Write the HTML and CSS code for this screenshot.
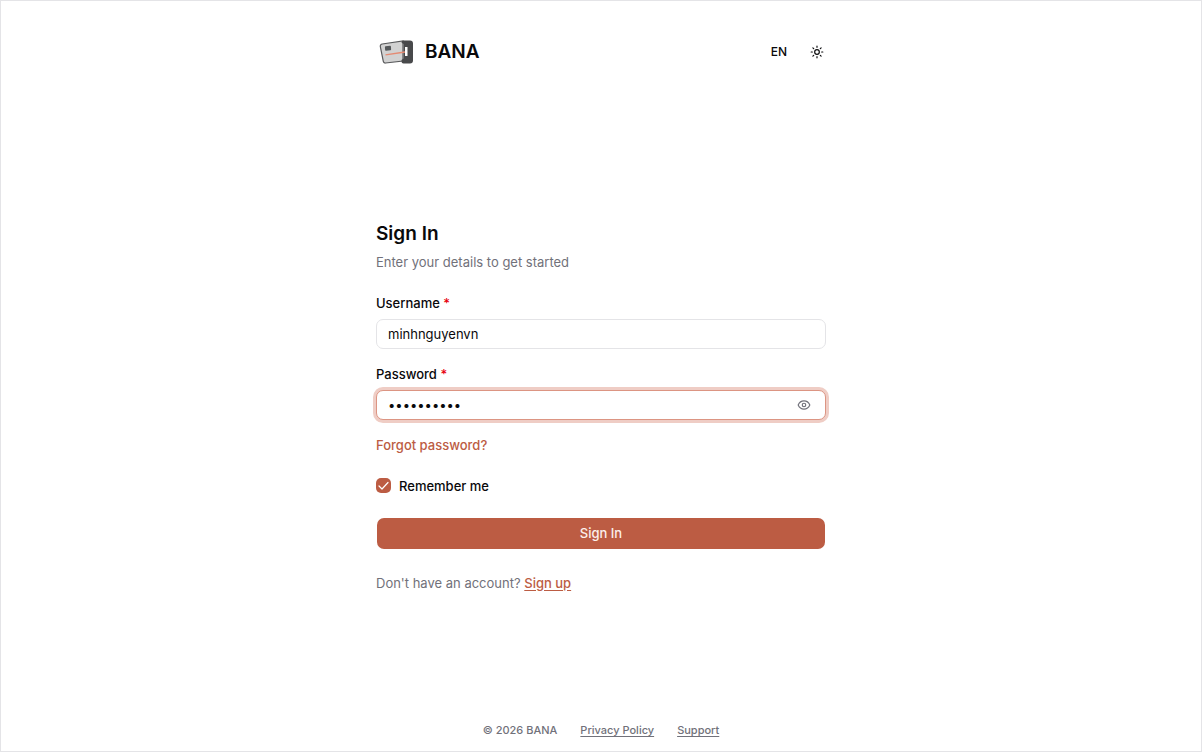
FILE: index.html
```html
<!DOCTYPE html>
<html lang="en">
<head>
  <meta charset="UTF-8">
  <meta name="viewport" content="width=device-width, initial-scale=1.0">
  <title>Sign In - BANA</title>
  <link rel="stylesheet" href="styles.css">
</head>
<body>

<div class="page">
  <header class="header">
    <a href="#" class="brand">
      <svg class="brand-logo" viewBox="0 0 36 26" aria-hidden="true">
        <path d="M3.200 5 24 2v20L6.500 24a2 2 0 0 1-2.200-1.600L1.300 7.500A2.200 2.200 0 0 1 3.200 5z" fill="#d2d2d2" stroke="#58595b" stroke-width="1.200"/>
        <path d="M24.500 1.500h6.500a3 3 0 0 1 3 3v17a3 3 0 0 1-3 3h-6.500a2 2 0 0 1-2-2v-1.500l2-1.500V5l-2-1.500a2 2 0 0 1 2-2z" fill="#48494b"/>
        <rect x="26" y="8" width="2.500" height="9" fill="#fff"/>
        <rect x="6" y="7" width="6" height="4.500" rx="0.800" fill="#55585a" transform="rotate(-4 9 9)"/>
        <path d="M6.500 15.800 26 13" stroke="#e58a72" stroke-width="1.300"/>
      </svg>
      <span class="brand-name">BANA</span>
    </a>
    <div class="header-actions">
      <button type="button" class="header-button">EN</button>
      <button type="button" class="header-button" aria-label="Toggle theme">
        <svg class="icon" viewBox="0 0 24 24" aria-hidden="true">
          <circle cx="12" cy="12" r="4"/>
          <path d="M12 2v2M12 20v2M4.930 4.930l1.410 1.410M17.660 17.660l1.410 1.410M2 12h2M20 12h2M6.340 17.660l-1.410 1.410M19.070 4.930l-1.410 1.410"/>
        </svg>
      </button>
    </div>
  </header>

  <main class="main">
    <h1 class="title">Sign In</h1>
    <p class="subtitle">Enter your details to get started</p>

    <form id="signinForm">
      <div class="form-group">
        <label for="username">Username <span class="required">*</span></label>
        <input type="text" id="username" name="username" class="text-input" value="minhnguyenvn">
      </div>
      <div class="form-group">
        <label for="password">Password <span class="required">*</span></label>
        <div class="password-field">
          <input type="password" id="password" name="password" class="password-input" value="mypassword">
          <button type="button" class="eye-button" aria-label="Show password">
            <svg class="icon" viewBox="0 0 24 24" aria-hidden="true">
              <path d="M2 12C4 7.500 7.500 5 12 5s8 2.500 10 7c-2 4.500-5.500 7-10 7S4 16.500 2 12z"/>
              <circle cx="12" cy="12" r="3"/>
            </svg>
          </button>
        </div>
      </div>
      <a href="#" class="forgot-link">Forgot password?</a>
      <div class="remember">
        <input type="checkbox" id="remember" name="remember" class="checkbox" checked>
        <label for="remember">Remember me</label>
      </div>
      <button type="submit" class="signin-button">Sign In</button>
    </form>

    <p class="signup-text">Don't have an account? <a href="#" class="signup-link">Sign up</a></p>
  </main>

  <footer class="footer">
    <span>© 2026 BANA</span>
    <a href="#">Privacy Policy</a>
    <a href="#">Support</a>
  </footer>
</div>

</body>
</html>
```
FILE: styles.css
```css
* {
  box-sizing: border-box;
}

/* Basic Page Styling */
body {
  margin: 0;
  font-family: Inter, sans-serif;
  font-size: 13px;
  line-height: 20px;
  color: #09090b;
  background-color: #fff;
}

h1,
p {
  margin: 0;
}

button,
input {
  font: inherit;
  color: inherit;
}

button {
  padding: 0;
  border: none;
  background: none;
  cursor: pointer;
}

.page {
  display: flex;
  flex-direction: column;
  align-items: center;
  min-height: 100vh;
  border: 1px solid #e4e4e7;
}

.icon {
  display: block;
  width: 14px;
  height: 14px;
  fill: none;
  stroke: currentColor;
  stroke-width: 2;
  stroke-linecap: round;
  stroke-linejoin: round;
}

/* Header */
.header {
  display: flex;
  justify-content: space-between;
  align-items: center;
  width: 100%;
  max-width: 450px;
  padding-top: 36px;
}

.brand {
  display: flex;
  align-items: center;
  gap: 10px;
  padding-left: 3px;
  color: inherit;
  text-decoration: none;
}

.brand-logo {
  width: 36px;
  height: 26px;
}

.brand-name {
  font-size: 19px;
  font-weight: 600;
  line-height: 30px;
}

.header-actions {
  display: flex;
  gap: 8px;
  margin-right: -6px;
}

.header-button {
  display: flex;
  justify-content: center;
  align-items: center;
  width: 30px;
  height: 30px;
  font-size: 12px;
  font-weight: 500;
}

/* Sign In Form */
.main {
  display: flex;
  flex: 1;
  flex-direction: column;
  justify-content: center;
  width: 100%;
  max-width: 450px;
  padding-top: 26px;
}

.title {
  font-size: 19px;
  font-weight: 600;
  line-height: 26px;
}

.subtitle {
  margin: 5px 0 21px;
  color: #71717a;
}

.form-group {
  margin-bottom: 15px;
}

.form-group label {
  display: block;
  margin-bottom: 6px;
  font-weight: 500;
}

.required {
  color: #e7000b;
}

.text-input,
.password-field {
  width: 100%;
  height: 30px;
  border: 1px solid #e4e4e7;
  border-radius: 7px;
  background-color: #fff;
}

.text-input {
  display: block;
  padding: 0 11px;
  outline: none;
}

.password-field {
  display: flex;
  align-items: center;
  border-color: #dc9583;
  box-shadow: 0 0 0 3px #efcdc5;
}

.password-input {
  flex: 1;
  min-width: 0;
  height: 28px;
  padding: 0 11px;
  border: none;
  outline: none;
  background: none;
}

.eye-button {
  padding: 0 14px;
  color: #71717a;
}

.forgot-link {
  color: #bc5c43;
  font-weight: 500;
  text-decoration: none;
}

.remember {
  display: flex;
  align-items: center;
  gap: 8px;
  margin: 21px 0;
  font-weight: 500;
}

.checkbox {
  appearance: none;
  width: 15px;
  height: 15px;
  margin: 0;
  border-radius: 5px;
  background: #bc5c43 url("data:image/svg+xml,%3Csvg xmlns='http://www.w3.org/2000/svg' viewBox='0 0 15 15'%3E%3Cpath d='M3 8l3 3 6-6.500' fill='none' stroke='white' stroke-width='1.200' stroke-linecap='round' stroke-linejoin='round'/%3E%3C/svg%3E");
}

.signin-button {
  display: block;
  width: 100%;
  height: 33px;
  border: 1px solid transparent;
  border-radius: 8px;
  color: #fdf0eb;
  background-color: #bc5c43;
  background-clip: padding-box;
  font-weight: 500;
}

.signup-text {
  margin-top: 23px;
  color: #71717a;
}

.signup-link {
  color: #bc5c43;
  font-weight: 500;
  text-underline-offset: 2px;
}

/* Footer */
.footer {
  display: flex;
  gap: 23px;
  padding-bottom: 11px;
  color: #71717a;
  font-size: 11px;
  font-weight: 500;
}

.footer a {
  color: inherit;
  text-underline-offset: 2px;
}
```
